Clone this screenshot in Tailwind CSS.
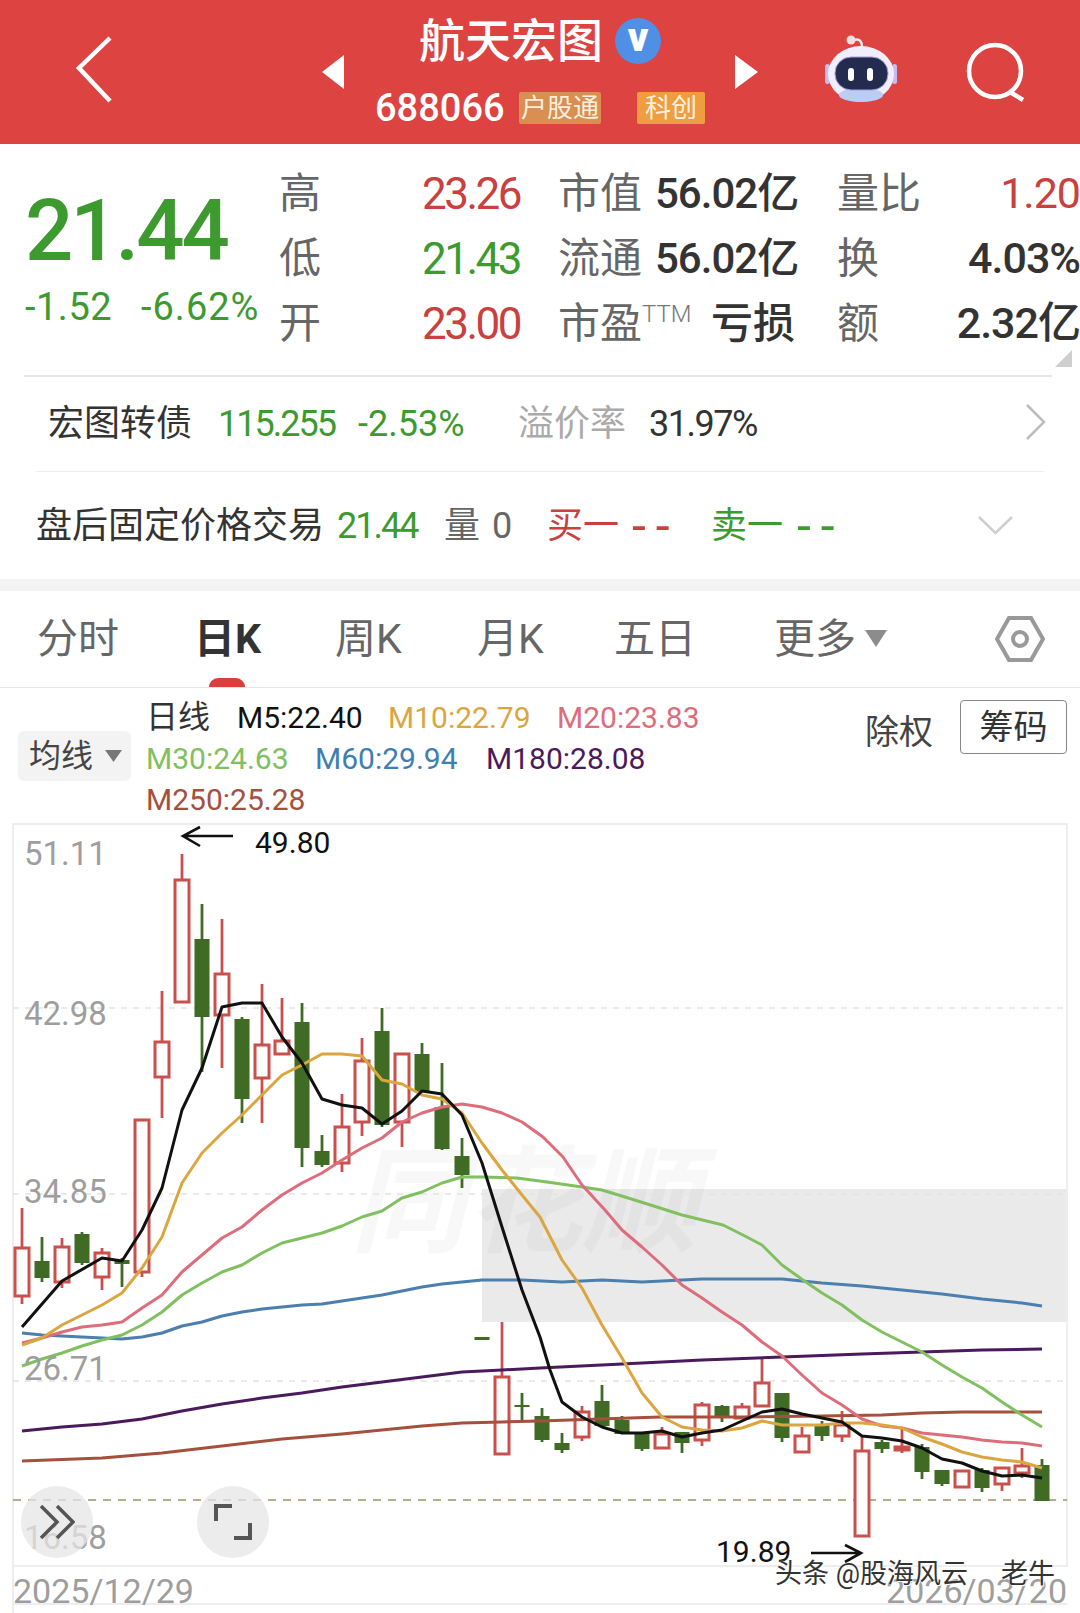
<!DOCTYPE html>
<html lang="zh-CN">

<head>
    <meta charset="UTF-8">
    <meta name="viewport" content="width=device-width, initial-scale=1.0">
    <title>航天宏图 日K</title>
    <script src="https://cdn.jsdelivr.net/npm/@tailwindcss/browser@4"></script>
</head>

<body class="bg-white w-[1080px] h-[1613px] overflow-hidden [font-family:Roboto,'Noto_Sans_CJK_SC',sans-serif]">
    <!-- Header -->
    <header class="h-[144px] bg-[#dc4341] flex items-start text-white">
        <svg class="ml-[74px] mt-[36px] w-[40px] h-[68px]" viewBox="0 0 40 68" fill="none" stroke="#ffffff" stroke-width="4.5"><path d="M36 2 L5 32 L36 65" /></svg>
        <svg class="ml-[208px] mt-[55px] w-[22px] h-[34px]" viewBox="0 0 22 34" fill="#ffffff"><path d="M22 0 V34 L0 17 Z" /></svg>
        <div class="w-[391px] flex flex-col">
            <div class="pl-[75px] h-[82px] flex items-center">
                <span class="text-[46px] leading-none font-medium">航天宏图</span>
                <span class="ml-[12px] w-[46px] h-[46px] rounded-full bg-[#4f8fe6] flex items-center justify-center text-[40px] font-black leading-none pb-[6px]">v</span>
            </div>
            <div class="mt-[10px] pl-[31px] h-[32px] flex items-center">
                <span class="w-[144px] text-[38px] leading-none font-medium">688066</span>
                <span class="w-[82px] h-[32px] bg-[#d98e52] rounded-[2px] flex items-center justify-center text-[26px] leading-none text-[#fdf0dc]">户股通</span>
                <span class="ml-[36px] w-[68px] h-[32px] bg-[#f09c41] rounded-[2px] flex items-center justify-center text-[26px] leading-none text-[#fff3df]">科创</span>
            </div>
        </div>
        <svg class="mt-[55px] w-[23px] h-[34px]" viewBox="0 0 23 34" fill="#ffffff"><path d="M0 0 V34 L23 17 Z" /></svg>
        <!-- Robot -->
        <svg class="ml-[67px] mt-[34px] w-[72px] h-[70px]" viewBox="0 -2 72 70" fill="none">
            <path d="M29 4 C35 2 37 6 37 11" stroke="#efe6ee" stroke-width="2.5" />
            <circle cx="26" cy="4" r="4.5" fill="#f3dfe0" />
            <rect x="0" y="28" width="5" height="20" rx="2.5" fill="#c9bcec" />
            <rect x="67" y="28" width="5" height="20" rx="2.5" fill="#c9bcec" />
            <ellipse cx="36" cy="38" rx="33" ry="28" fill="#f1eefb" />
            <ellipse cx="36" cy="59" rx="22" ry="7" fill="#bccdf5" />
            <rect x="10" y="21" width="53" height="33" rx="16" fill="#232c4e" stroke="#a99bdd" stroke-width="1" />
            <rect x="23" y="32" width="6" height="13" rx="3" fill="#ffffff" />
            <rect x="42" y="32" width="6" height="13" rx="3" fill="#ffffff" />
        </svg>
        <svg class="ml-[69px] mt-[42px] w-[60px] h-[60px]" viewBox="0 0 60 60" fill="none" stroke="#ffffff" stroke-width="4.5"><circle cx="29" cy="29" r="26" /><path d="M44 50 L57 58" /></svg>
    </header>

    <!-- Quote -->
    <section class="h-[231px] relative">
        <div class="flex pt-[17px]">
            <div class="w-[279px] pl-[25px] pt-[22px]">
                <div class="text-[#3c9a2f] text-[85px] leading-[96px] font-medium tracking-[-3px]">21.44</div>
                <div class="text-[#3c9a2f] text-[38px] leading-[44px] flex mt-[6px] tracking-[0.5px]">
                    <span class="w-[116px]">-1.52</span><span class="tracking-[1px]">-6.62%</span>
                </div>
            </div>
            <div class="grid grid-cols-[143px_136px_97px_182px_auto] auto-rows-[65px] items-center text-[42px] leading-none text-[#333333]">
                <span class="text-[#666666]">高</span>
                <span class="text-[#c9403e] text-[44px] tracking-[-2.5px]">23.26</span>
                <span class="text-[#666666]">市值</span>
                <span class="font-medium whitespace-nowrap tracking-[-1px]">56.02亿</span>
                <span class="text-[#666666] whitespace-nowrap">量比</span>

                <span class="text-[#666666]">低</span>
                <span class="text-[#3c9a2f] text-[44px] tracking-[-2.5px]">21.43</span>
                <span class="text-[#666666]">流通</span>
                <span class="font-medium whitespace-nowrap tracking-[-1px]">56.02亿</span>
                <span class="text-[#666666]">换</span>

                <span class="text-[#666666]">开</span>
                <span class="text-[#c9403e] text-[44px] tracking-[-2.5px]">23.00</span>
                <span class="text-[#666666] whitespace-nowrap">市盈<sup class="text-[24px] font-light text-[#777777] top-[-16px]">TTM</sup></span>
                <span class="ml-[56px] font-medium whitespace-nowrap">亏损</span>
                <span class="text-[#666666]">额</span>
            </div>
        </div>
        <!-- value column on the far right -->
        <div class="absolute right-0 top-[17px] flex flex-col items-end text-[43px] leading-[65px] text-[#333333] font-medium tracking-[-1px]">
            <span class="text-[#c9403e] font-normal">1.20</span>
            <span>4.03%</span>
            <span>2.32亿</span>
        </div>
        <svg class="absolute right-[8px] top-[206px] w-[17px] h-[17px]" viewBox="0 0 17 17" fill="#cfcfcf"><path d="M17 0 V17 H0 Z" /></svg>
    </section>

    <div class="ml-[24px] w-[1028px] h-[2px] bg-[#e8e8e8]"></div>

    <!-- Convertible bond -->
    <div class="h-[94px] flex items-center pl-[48px] text-[36px] leading-none relative">
        <span class="w-[170px] text-[#333333]">宏图转债</span>
        <span class="w-[140px] text-[#3c9a2f] tracking-[-2px]">115.255</span>
        <span class="w-[160px] text-[#3c9a2f]">-2.53%</span>
        <span class="w-[131px] text-[#aaaaaa]">溢价率</span>
        <span class="text-[#333333] tracking-[-1.5px]">31.97%</span>
        <svg class="absolute left-[1025px] top-[27px] w-[21px] h-[36px]" viewBox="0 0 21 36" fill="none" stroke="#bdbdbd" stroke-width="2.5"><path d="M2 1 L19 18 L2 35" /></svg>
    </div>

    <div class="ml-[36px] w-[1008px] h-[1px] bg-[#eeeeee]"></div>

    <!-- After-hours row -->
    <div class="h-[107px] flex items-center pl-[36px] text-[36px] leading-none relative">
        <span class="w-[301px] text-[#333333]">盘后固定价格交易</span>
        <span class="w-[107px] text-[#3c9a2f] tracking-[-2px]">21.44</span>
        <span class="w-[48px] text-[#666666]">量</span>
        <span class="w-[55px] text-[#666666]">0</span>
        <span class="w-[85px] text-[#c9403e]">买一</span>
        <span class="w-[79px] text-[#c9403e] text-[50px] tracking-[10px]">--</span>
        <span class="w-[86px] text-[#3c9a2f]">卖一</span>
        <span class="text-[#3c9a2f] text-[50px] tracking-[10px]">--</span>
        <svg class="absolute left-[978px] top-[44px] w-[35px] h-[19px]" viewBox="0 0 35 19" fill="none" stroke="#cfcfcf" stroke-width="2.5"><path d="M1 1 L17.5 17 L34 1" /></svg>
    </div>

    <div class="h-[12px] bg-[#f3f3f3]"></div>

    <!-- Period tabs -->
    <nav class="h-[97px] relative border-b border-[#e5e5e5] flex items-start pt-[28px] text-[41px] leading-[40px] text-[#666666]">
        <span class="ml-[37px] w-[157px]">分时</span>
        <span class="w-[141px] text-[#333333] font-bold">日K</span>
        <span class="w-[142px]">周K</span>
        <span class="w-[137px]">月K</span>
        <span class="w-[160px]">五日</span>
        <span class="w-[91px]">更多</span>
        <svg class="mt-[11px] w-[22px] h-[17px]" viewBox="0 0 22 17" fill="#8c8c8c"><path d="M0 0 H22 L11 17 Z" /></svg>
        <svg class="absolute left-[995px] top-[25px] w-[50px] h-[46px]" viewBox="0 0 50 46" fill="none" stroke="#999999" stroke-width="4"><path d="M14 2 H36 L48 23 L36 44 H14 L2 23 Z" /><circle cx="25" cy="23" r="7" /></svg>
        <div class="absolute left-[209px] bottom-0 w-[36px] h-[9px] bg-[#d9403c] rounded-t-full"></div>
    </nav>

    <!-- Legend -->
    <div class="h-[136px] relative text-[30px] leading-[41px]">
        <div class="absolute left-[18px] top-[43px] w-[113px] h-[50px] bg-[#f3f3f3] rounded-[6px] flex items-center pl-[11px] text-[32px] text-[#444444]">
            <span>均线</span>
            <svg class="ml-[12px] w-[17px] h-[12px]" viewBox="0 0 17 12" fill="#777777"><path d="M0 0 H17 L8.5 12 Z" /></svg>
        </div>
        <div class="ml-[146px] pt-[9px] flex flex-col">
            <div class="flex whitespace-nowrap">
                <span class="w-[91px] text-[32px] text-[#333333]">日线</span>
                <span class="w-[151px] text-[#111111]">M5:22.40</span>
                <span class="w-[169px] text-[#dba63f]">M10:22.79</span>
                <span class="text-[#dd6d7b]">M20:23.83</span>
            </div>
            <div class="flex whitespace-nowrap">
                <span class="w-[169px] text-[#80c060]">M30:24.63</span>
                <span class="w-[171px] text-[#3f7eb1]">M60:29.94</span>
                <span class="text-[#4b1a5c]">M180:28.08</span>
            </div>
            <div class="text-[#a5503c]">M250:25.28</div>
        </div>
        <span class="absolute left-[865px] top-[24px] text-[34px] leading-[40px] text-[#444444]">除权</span>
        <span class="absolute left-[960px] top-[12px] w-[107px] h-[54px] border border-[#888888] rounded-[4px] flex items-center justify-center text-[34px] text-[#333333]">筹码</span>
    </div>

    <!-- K-line chart -->
    <div class="relative w-[1080px] h-[790px] mt-[-1px]">
        <svg id="chart" class="absolute inset-0 w-[1080px] h-[790px]" viewBox="0 823 1080 790">
            <rect x="482" y="1189" width="586" height="133" fill="#eaeaea" />
            <text x="350" y="1243" font-size="116" font-weight="700" font-style="italic" fill="#000000" fill-opacity="0.028">同花顺</text>
            <path d="M13 824 H1067 V1566 H13 Z M13 1566 V1613 M13 1604 H1067" fill="none" stroke="#eeeeee" stroke-width="2" />
            <g stroke="#e3e3e3" stroke-width="1.5" stroke-dasharray="6 6">
                <path d="M13 1008 H1067" />
                <path d="M13 1194 H1067" />
                <path d="M13 1381 H1067" />
            </g>
            <path d="M13 1500 H1067" stroke="#b5ad8c" stroke-width="2" stroke-dasharray="8 7" />
            <g id="candles"></g>
            <g id="lines" fill="none" stroke-width="3" stroke-linejoin="round"></g>
            <g font-size="33" fill="#9e9e9e">
                <text x="24" y="865">51.11</text>
                <text x="24" y="1025">42.98</text>
                <text x="24" y="1203">34.85</text>
                <text x="24" y="1380">26.71</text>
                <text x="24" y="1549">16.58</text>
                <text x="13" y="1603" font-size="34">2025/12/29</text>
                <text x="1067" y="1603" font-size="34" text-anchor="end">2026/03/20</text>
            </g>
            <g font-size="30" fill="#111111">
                <text x="255" y="853">49.80</text>
                <text x="716" y="1562">19.89</text>
            </g>
            <g fill="none" stroke="#111111" stroke-width="2.6">
                <path d="M233 836 H183 M200 827 L183 836 L200 846" />
                <path d="M811 1553 H861 M845 1545 L861 1553 L845 1562" />
            </g>
        </svg>

        <!-- Floating chart buttons -->
        <div class="absolute left-[21px] top-[663px] w-[72px] h-[72px] rounded-full bg-[#e6e6e6]/75 flex items-center justify-center">
            <svg class="w-[36px] h-[34px]" viewBox="0 0 36 34" fill="none" stroke="#555555" stroke-width="3.5"><path d="M2 1 L18 17 L2 33 M18 1 L34 17 L18 33" /></svg>
        </div>
        <div class="absolute left-[197px] top-[663px] w-[72px] h-[72px] rounded-full bg-[#e6e6e6]/75 flex items-center justify-center">
            <svg class="w-[38px] h-[36px]" viewBox="0 0 38 36" fill="none" stroke="#555555" stroke-width="4"><path d="M2 17 V2 H18 M20 34 H36 V19" /></svg>
        </div>

        <!-- Site watermark -->
        <div class="absolute left-[775px] top-[733px] flex text-[27px] leading-[36px] text-[#333333] whitespace-nowrap [text-shadow:0_0_2px_#ffffff,1px_1px_0_#ffffff]">
            <span class="w-[226px]">头条 @股海风云</span>
            <span>老牛</span>
        </div>
    </div>

    <script>
        // [x, wickTop, bodyTop, bodyBottom, wickBottom, isUp]
        const candles = [
            [22, 1208, 1248, 1296, 1304, 1], [42, 1237, 1261, 1278, 1282, 0], [62, 1238, 1247, 1282, 1288, 1],
            [82, 1232, 1234, 1263, 1265, 0], [102, 1248, 1253, 1277, 1290, 1], [122, 1258, 1260, 1264, 1287, 0],
            [142, 1120, 1120, 1272, 1277, 1], [162, 991, 1042, 1077, 1118, 1], [182, 854, 880, 1002, 1003, 1],
            [202, 904, 939, 1017, 1072, 0], [222, 919, 974, 1015, 1068, 1], [242, 1017, 1019, 1099, 1123, 0],
            [262, 984, 1045, 1078, 1123, 1], [282, 998, 1041, 1054, 1054, 1], [302, 1003, 1022, 1148, 1167, 0],
            [322, 1135, 1151, 1165, 1167, 0], [342, 1094, 1127, 1163, 1172, 1], [362, 1038, 1061, 1122, 1136, 1],
            [382, 1008, 1031, 1125, 1127, 0], [402, 1053, 1054, 1122, 1147, 1], [422, 1043, 1054, 1092, 1092, 0],
            [442, 1063, 1107, 1149, 1150, 0], [462, 1138, 1156, 1175, 1188, 0], [482, 1337, 1337, 1340, 1340, 0],
            [502, 1322, 1377, 1454, 1455, 1], [522, 1393, 1405, 1407, 1421, 0], [542, 1408, 1416, 1440, 1442, 0],
            [562, 1433, 1443, 1450, 1453, 0], [582, 1406, 1412, 1437, 1441, 1], [602, 1385, 1401, 1426, 1426, 0],
            [622, 1416, 1420, 1434, 1434, 0], [642, 1432, 1433, 1449, 1451, 0], [662, 1427, 1434, 1448, 1448, 1],
            [682, 1432, 1432, 1443, 1453, 0], [702, 1402, 1405, 1440, 1446, 1], [722, 1405, 1406, 1416, 1422, 0],
            [742, 1403, 1407, 1418, 1418, 1], [762, 1358, 1383, 1406, 1406, 1], [782, 1393, 1393, 1438, 1442, 0],
            [802, 1427, 1436, 1452, 1452, 1], [822, 1421, 1425, 1436, 1441, 0], [842, 1411, 1425, 1436, 1442, 1],
            [862, 1437, 1451, 1536, 1536, 1], [882, 1440, 1442, 1449, 1453, 0], [902, 1428, 1447, 1450, 1453, 1],
            [922, 1444, 1447, 1472, 1479, 0], [942, 1470, 1470, 1484, 1486, 0], [962, 1471, 1471, 1487, 1487, 1],
            [982, 1468, 1470, 1488, 1492, 0], [1002, 1468, 1468, 1484, 1491, 1], [1022, 1448, 1466, 1473, 1478, 1],
            [1042, 1459, 1465, 1501, 1501, 0]
        ];

        const ma5 = "22,1327 62,1281 102,1258 122,1261 142,1230 162,1188 182,1110 202,1068 222,1007 242,1003 262,1003 282,1037 302,1063 322,1099 342,1105 362,1108 382,1124 402,1111 422,1091 442,1094 462,1115 482,1163 502,1227 522,1290 540,1337 550,1370 562,1402 582,1417 602,1427 622,1433 642,1433 662,1431 682,1437 702,1433 722,1430 742,1421 762,1412 782,1409 802,1414 822,1418 842,1422 862,1436 882,1438 902,1441 922,1448 942,1459 962,1463 982,1471 1002,1476 1022,1475 1042,1478";
        const ma10 = "22,1345 42,1338 62,1325 82,1315 102,1305 122,1293 142,1268 162,1237 182,1183 202,1153 222,1133 242,1115 262,1095 282,1075 302,1065 322,1054 342,1054 362,1056 382,1080 402,1084 422,1095 442,1099 462,1113 482,1143 502,1170 522,1195 540,1217 562,1260 582,1288 602,1325 622,1358 642,1393 662,1417 682,1427 702,1430 722,1431 742,1428 762,1421 782,1425 802,1425 822,1425 842,1423 862,1423 882,1425 902,1428 922,1437 942,1444 962,1452 982,1457 1002,1460 1022,1462 1042,1468";
        const ma20 = "22,1343 42,1338 62,1332 82,1327 102,1325 122,1322 142,1308 162,1295 182,1272 202,1255 222,1238 242,1227 262,1210 282,1195 302,1183 322,1173 342,1160 362,1148 382,1138 402,1122 422,1113 442,1107 462,1104 482,1107 502,1113 522,1122 543,1137 563,1157 582,1185 605,1210 622,1230 642,1247 662,1265 682,1285 702,1298 722,1312 742,1325 762,1342 782,1356 802,1375 822,1393 842,1405 862,1419 882,1426 902,1428 922,1433 942,1435 962,1437 982,1440 1002,1442 1022,1443 1042,1446";
        const ma30 = "22,1366 42,1359 62,1353 82,1346 102,1340 122,1335 142,1325 162,1312 182,1295 202,1283 222,1272 242,1265 262,1253 282,1243 302,1238 322,1233 342,1226 362,1217 382,1211 402,1198 422,1192 442,1183 462,1177 482,1177 517,1178 547,1182 582,1187 602,1190 625,1197 660,1208 682,1215 723,1225 743,1235 762,1245 782,1265 803,1280 822,1293 842,1305 862,1320 882,1332 902,1342 922,1352 942,1365 962,1377 982,1388 1002,1402 1022,1415 1042,1427";
        const ma60 = "22,1333 42,1335 62,1336 82,1337 102,1338 122,1339 142,1337 162,1333 182,1326 202,1322 222,1316 242,1312 262,1309 282,1307 302,1305 322,1304 342,1301 362,1298 382,1295 402,1291 422,1287 442,1284 462,1282 482,1280 522,1280 542,1281 562,1282 582,1281 602,1280 622,1281 642,1282 662,1281 682,1280 702,1279 782,1279 802,1281 822,1283 862,1286 902,1290 922,1292 942,1294 982,1299 1022,1303 1042,1306";
        const ma180 = "22,1431 62,1427 102,1424 142,1419 162,1415 182,1411 222,1404 262,1398 302,1393 342,1387 382,1382 422,1377 462,1372 502,1370 540,1368 622,1364 702,1360 782,1357 862,1354 922,1352 982,1350 1042,1349";
        const ma250 = "22,1461 102,1458 162,1453 222,1446 282,1439 342,1434 382,1430 422,1426 462,1423 502,1422 540,1421 660,1417 742,1417 822,1416 882,1415 922,1413 962,1412 1042,1412";

        const ns = 'http://www.w3.org/2000/svg';
        const add = (parent, tag, attrs) => {
            const el = document.createElementNS(ns, tag);
            for (const k in attrs) el.setAttribute(k, attrs[k]);
            parent.appendChild(el);
        };

        const candleGroup = document.getElementById('candles');
        candles.forEach(([x, wt, bt, bb, wb, up]) => {
            const color = up ? '#c9504d' : '#3f6b24';
            add(candleGroup, 'path', { d: `M${x} ${wt} V${wb}`, stroke: color, 'stroke-width': 2.8 });
            if (up) {
                add(candleGroup, 'rect', { x: x - 7, y: bt, width: 14, height: bb - bt, fill: '#ffffff', stroke: color, 'stroke-width': 3 });
            } else {
                add(candleGroup, 'rect', { x: x - 7.5, y: bt, width: 15, height: bb - bt, fill: color });
            }
        });

        const lineGroup = document.getElementById('lines');
        [[ma250, '#a5503c'], [ma180, '#4b1a5c'], [ma60, '#4a7fae'], [ma30, '#80c060'], [ma20, '#dd6d7b'], [ma10, '#dba63f'], [ma5, '#111111']]
            .forEach(([points, stroke]) => add(lineGroup, 'polyline', { points, stroke }));
    </script>
</body>

</html>
